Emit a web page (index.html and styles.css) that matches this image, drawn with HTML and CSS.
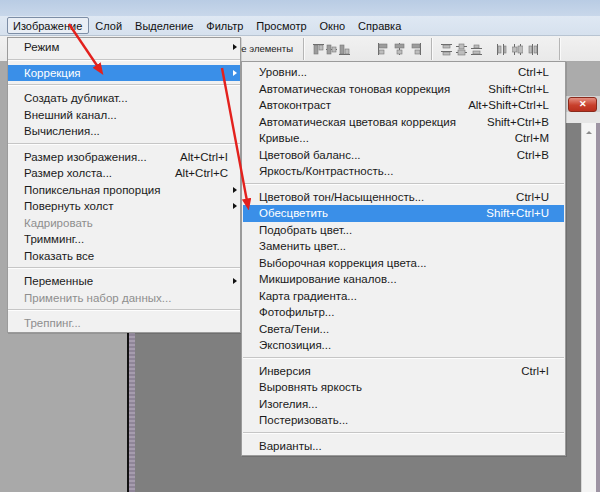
FILE: index.html
```html
<!DOCTYPE html>
<html lang="ru">
<head>
<meta charset="utf-8">
<title>Изображение — Коррекция</title>
<link rel="stylesheet" href="styles.css">
</head>
<body>
<div class="screen">
  <div class="titlebar"></div>
  <nav class="menubar">
    <span class="mb-item active">Изображение</span>
    <span class="mb-item">Слой</span>
    <span class="mb-item">Выделение</span>
    <span class="mb-item">Фильтр</span>
    <span class="mb-item">Просмотр</span>
    <span class="mb-item">Окно</span>
    <span class="mb-item">Справка</span>
  </nav>
  <div class="toolbar">
    <div class="tb-options"><span class="tb-label">Автовыбор: Слой&nbsp;&nbsp;Показать управляющие элементы</span></div>
    <span class="tb-sep"></span>
    <div class="tb-group g1">
      <svg class="ico" viewBox="0 0 11 14"><rect x="0" y="2" width="11" height="1" fill="#6a6a6a"/><rect x="1" y="3" width="4" height="9" fill="#9c9c9c" stroke="#777" stroke-width=".6"/><rect x="6" y="3" width="4" height="5" fill="#bdbdbd" stroke="#777" stroke-width=".6"/></svg>
      <svg class="ico" viewBox="0 0 11 14"><rect x="0" y="7" width="11" height="1" fill="#6a6a6a"/><rect x="1" y="3" width="4" height="9" fill="#9c9c9c" stroke="#777" stroke-width=".6"/><rect x="6" y="5" width="4" height="5" fill="#bdbdbd" stroke="#777" stroke-width=".6"/></svg>
      <svg class="ico" viewBox="0 0 11 14"><rect x="0" y="12" width="11" height="1" fill="#6a6a6a"/><rect x="1" y="3" width="4" height="9" fill="#9c9c9c" stroke="#777" stroke-width=".6"/><rect x="6" y="7" width="4" height="5" fill="#bdbdbd" stroke="#777" stroke-width=".6"/></svg>
    </div>
    <div class="tb-group g2">
      <svg class="ico" viewBox="0 0 11 14"><rect x="1" y="1" width="1" height="12" fill="#6a6a6a"/><rect x="2" y="2" width="8" height="4" fill="#9c9c9c" stroke="#777" stroke-width=".6"/><rect x="2" y="8" width="5" height="4" fill="#bdbdbd" stroke="#777" stroke-width=".6"/></svg>
      <svg class="ico" viewBox="0 0 11 14"><rect x="5" y="1" width="1" height="12" fill="#6a6a6a"/><rect x="1" y="2" width="9" height="4" fill="#9c9c9c" stroke="#777" stroke-width=".6"/><rect x="3" y="8" width="5" height="4" fill="#bdbdbd" stroke="#777" stroke-width=".6"/></svg>
      <svg class="ico" viewBox="0 0 11 14"><rect x="9" y="1" width="1" height="12" fill="#6a6a6a"/><rect x="1" y="2" width="8" height="4" fill="#9c9c9c" stroke="#777" stroke-width=".6"/><rect x="4" y="8" width="5" height="4" fill="#bdbdbd" stroke="#777" stroke-width=".6"/></svg>
    </div>
    <span class="tb-sep"></span>
    <div class="tb-group g3">
      <svg class="ico" viewBox="0 0 11 14"><rect x="0" y="2" width="11" height="1" fill="#6a6a6a"/><rect x="0" y="9" width="11" height="1" fill="#6a6a6a"/><rect x="2" y="3" width="7" height="3" fill="#bdbdbd" stroke="#777" stroke-width=".6"/><rect x="2" y="10" width="7" height="3" fill="#bdbdbd" stroke="#777" stroke-width=".6"/></svg>
      <svg class="ico" viewBox="0 0 11 14"><rect x="0" y="4" width="11" height="1" fill="#6a6a6a"/><rect x="0" y="10" width="11" height="1" fill="#6a6a6a"/><rect x="3" y="2" width="5" height="5" fill="#bdbdbd" stroke="#777" stroke-width=".6"/><rect x="2" y="8" width="7" height="5" fill="#bdbdbd" stroke="#777" stroke-width=".6"/></svg>
      <svg class="ico" viewBox="0 0 11 14"><rect x="0" y="6" width="11" height="1" fill="#6a6a6a"/><rect x="0" y="12" width="11" height="1" fill="#6a6a6a"/><rect x="3" y="3" width="5" height="3" fill="#bdbdbd" stroke="#777" stroke-width=".6"/><rect x="2" y="9" width="7" height="3" fill="#bdbdbd" stroke="#777" stroke-width=".6"/></svg>
    </div>
    <div class="tb-group g4">
      <svg class="ico" viewBox="0 0 11 14"><rect x="1" y="2" width="1" height="11" fill="#6a6a6a"/><rect x="7" y="2" width="1" height="11" fill="#6a6a6a"/><rect x="2" y="4" width="3" height="7" fill="#bdbdbd" stroke="#777" stroke-width=".6"/><rect x="8" y="4" width="2" height="7" fill="#bdbdbd" stroke="#777" stroke-width=".6"/></svg>
      <svg class="ico" viewBox="0 0 11 14"><rect x="2" y="2" width="1" height="11" fill="#6a6a6a"/><rect x="8" y="2" width="1" height="11" fill="#6a6a6a"/><rect x="0" y="5" width="5" height="5" fill="#bdbdbd" stroke="#777" stroke-width=".6"/><rect x="6" y="4" width="5" height="7" fill="#bdbdbd" stroke="#777" stroke-width=".6"/></svg>
      <svg class="ico" viewBox="0 0 11 14"><rect x="4" y="2" width="1" height="11" fill="#6a6a6a"/><rect x="9" y="2" width="1" height="11" fill="#6a6a6a"/><rect x="1" y="4" width="3" height="7" fill="#bdbdbd" stroke="#777" stroke-width=".6"/><rect x="6" y="4" width="3" height="7" fill="#bdbdbd" stroke="#777" stroke-width=".6"/></svg>
    </div>
    <span class="tb-sep"></span>
  </div>
  <div class="workspace">
    <div class="left-panel"></div>
    <div class="divider"></div>
    <div class="right-area">
      <div class="band"></div>
      <div class="doc-title"><span class="close-btn">✕</span></div>
      <div class="doc-strip"></div>
      <div class="doc-body">
        <div class="canvas"></div>
        <div class="scroll"><span class="scroll-up"></span></div>
        <div class="edge"></div>
      </div>
    </div>
  </div>

  <div class="menu menu-main">
    <div class="row"><span class="lbl">Режим</span><span class="sc"></span><span class="arr"></span></div>
    <div class="sep"></div>
    <div class="row hl"><span class="lbl">Коррекция</span><span class="sc"></span><span class="arr"></span></div>
    <div class="sep"></div>
    <div class="row"><span class="lbl">Создать дубликат...</span></div>
    <div class="row"><span class="lbl">Внешний канал...</span></div>
    <div class="row"><span class="lbl">Вычисления...</span></div>
    <div class="sep"></div>
    <div class="row"><span class="lbl">Размер изображения...</span><span class="sc">Alt+Ctrl+I</span></div>
    <div class="row"><span class="lbl">Размер холста...</span><span class="sc">Alt+Ctrl+C</span></div>
    <div class="row"><span class="lbl">Попиксельная пропорция</span><span class="sc"></span><span class="arr"></span></div>
    <div class="row"><span class="lbl">Повернуть холст</span><span class="sc"></span><span class="arr"></span></div>
    <div class="row dis"><span class="lbl">Кадрировать</span></div>
    <div class="row"><span class="lbl">Тримминг...</span></div>
    <div class="row"><span class="lbl">Показать все</span></div>
    <div class="sep"></div>
    <div class="row"><span class="lbl">Переменные</span><span class="sc"></span><span class="arr"></span></div>
    <div class="row dis"><span class="lbl">Применить набор данных...</span></div>
    <div class="sep"></div>
    <div class="row dis"><span class="lbl">Треппинг...</span></div>
  </div>

  <div class="menu menu-sub">
    <div class="row"><span class="lbl">Уровни...</span><span class="sc">Ctrl+L</span></div>
    <div class="row"><span class="lbl">Автоматическая тоновая коррекция</span><span class="sc">Shift+Ctrl+L</span></div>
    <div class="row"><span class="lbl">Автоконтраст</span><span class="sc">Alt+Shift+Ctrl+L</span></div>
    <div class="row"><span class="lbl">Автоматическая цветовая коррекция</span><span class="sc">Shift+Ctrl+B</span></div>
    <div class="row"><span class="lbl">Кривые...</span><span class="sc">Ctrl+M</span></div>
    <div class="row"><span class="lbl">Цветовой баланс...</span><span class="sc">Ctrl+B</span></div>
    <div class="row"><span class="lbl">Яркость/Контрастность...</span></div>
    <div class="sep"></div>
    <div class="row"><span class="lbl">Цветовой тон/Насыщенность...</span><span class="sc">Ctrl+U</span></div>
    <div class="row hl"><span class="lbl">Обесцветить</span><span class="sc">Shift+Ctrl+U</span></div>
    <div class="row"><span class="lbl">Подобрать цвет...</span></div>
    <div class="row"><span class="lbl">Заменить цвет...</span></div>
    <div class="row"><span class="lbl">Выборочная коррекция цвета...</span></div>
    <div class="row"><span class="lbl">Микширование каналов...</span></div>
    <div class="row"><span class="lbl">Карта градиента...</span></div>
    <div class="row"><span class="lbl">Фотофильтр...</span></div>
    <div class="row"><span class="lbl">Света/Тени...</span></div>
    <div class="row"><span class="lbl">Экспозиция...</span></div>
    <div class="sep"></div>
    <div class="row"><span class="lbl">Инверсия</span><span class="sc">Ctrl+I</span></div>
    <div class="row"><span class="lbl">Выровнять яркость</span></div>
    <div class="row"><span class="lbl">Изогелия...</span></div>
    <div class="row"><span class="lbl">Постеризовать...</span></div>
    <div class="sep"></div>
    <div class="row"><span class="lbl">Варианты...</span></div>
  </div>

  <svg class="arrows" viewBox="0 0 600 492" width="600" height="492">
    <defs>
      <marker id="ah" markerWidth="5" markerHeight="4" refX="1" refY="2" orient="auto" markerUnits="strokeWidth">
        <path d="M0,0 L5,2 L0,4 z" fill="#e3211d"/>
      </marker>
    </defs>
    <line x1="69" y1="24" x2="98" y2="67" stroke="#e3211d" stroke-width="2.4" marker-end="url(#ah)"/>
    <line x1="222" y1="68" x2="247" y2="201" stroke="#e3211d" stroke-width="2.4" marker-end="url(#ah)"/>
  </svg>
</div>
</body>
</html>
```

FILE: styles.css
```css
* { box-sizing: border-box; }
html, body { margin: 0; padding: 0; }
body {
  width: 600px;
  height: 492px;
  overflow: hidden;
  font-family: "Liberation Sans", Arial, sans-serif;
  font-size: 11px;
  color: #1a1a1a;
}
.screen {
  position: relative;
  width: 600px;
  height: 492px;
  display: flex;
  flex-direction: column;
  background: #808080;
  overflow: hidden;
}
.titlebar {
  height: 16px;
  flex: none;
  background: linear-gradient(#b9cce4, #c8d7ea);
}
.menubar {
  height: 20px;
  flex: none;
  display: flex;
  align-items: center;
  padding-left: 7px;
  background: linear-gradient(#dfe8f3, #d6e1ee);
  border-bottom: 1px solid #b8c4d2;
}
.mb-item {
  padding: 0 6px 0 5px;
  height: 17px;
  line-height: 16px;
  font-size: 11px;
  color: #111;
  border: 1px solid transparent;
}
.mb-item.active {
  border-color: #7d8ea6;
  border-radius: 2px;
  background: #e9eef5;
}
.toolbar {
  height: 26px;
  flex: none;
  display: flex;
  align-items: center;
  background: linear-gradient(#f1f1f1, #e9e9e9);
  border-bottom: 1px solid #a9a9a9;
}
.tb-options {
  width: 298px;
  flex: none;
  display: flex;
  justify-content: flex-end;
  overflow: hidden;
  padding-right: 5px;
}
.tb-label {
  white-space: nowrap;
  font-size: 9.5px;
  color: #222;
}
.tb-sep {
  width: 2px;
  height: 22px;
  flex: none;
  border-left: 1px solid #b5b5b5;
  border-right: 1px solid #fafafa;
  margin-left: 5px;
}
.tb-group {
  display: flex;
  align-items: center;
  flex: none;
}
.ico { width: 11px; height: 14px; display: block; }
.g1 { margin-left: 8px; gap: 2px; }
.g2 { margin-left: 27px; gap: 6px; }
.g3 { margin-left: 8px; gap: 4px; }
.g4 { margin-left: 14px; gap: 5px; }
.tb-group.g4 + .tb-sep { margin-left: 20px; }
.tb-group.g2 + .tb-sep { margin-left: 9px; }

.workspace {
  flex: 1;
  display: grid;
  grid-template-columns: 127px 8px 1fr;
}
.left-panel { background: #a9a9a9; }
.divider {
  border-left: 2px solid #111;
  background: repeating-linear-gradient(#8f8598 0 2px, #a69cae 2px 4px);
}
.right-area {
  display: flex;
  flex-direction: column;
}
.band { height: 34px; background: #ababab; flex: none; }
.doc-title {
  height: 16px;
  flex: none;
  display: flex;
  justify-content: flex-end;
  align-items: center;
  padding-right: 3px;
  background: #d2d2d2;
}
.close-btn {
  width: 29px;
  height: 15px;
  border-radius: 3px;
  background: linear-gradient(#e48e80, #c8402c 55%, #b9301e);
  border: 1px solid #8a2a1c;
  color: #fff;
  font-size: 9px;
  line-height: 13px;
  text-align: center;
  font-weight: bold;
}
.doc-strip { height: 11px; flex: none; background: #e6e6e6; }
.doc-body {
  flex: 1;
  display: grid;
  grid-template-columns: 1fr 15px 4px;
}
.canvas { background: #7f7f7f; }
.scroll {
  background: #f4f4f4;
  border-left: 1px solid #d8d8d8;
  display: flex;
  justify-content: center;
  padding-top: 8px;
}
.scroll-up {
  width: 0; height: 0;
  border-left: 3px solid transparent;
  border-right: 3px solid transparent;
  border-bottom: 3px solid #8a8a8a;
}
.edge { background: #9d94a3; }

.menu {
  position: absolute;
  background: #f1f1f1;
  border: 1px solid #9b9b9b;
  box-shadow: 1px 1px 0 rgba(0,0,0,0.12);
  font-size: 11.5px;
}
.menu-main {
  left: 7px;
  top: 37px;
  width: 234px;
  padding: 1px 0 0;
}
.menu-sub {
  left: 241px;
  top: 61px;
  width: 325px;
  padding: 2px 1px 1px;
}
.row {
  height: 16.5px;
  line-height: 16.5px;
  display: grid;
  grid-template-columns: 1fr auto 12px;
  white-space: nowrap;
}
.menu-main .row { padding-left: 16px; }
.menu-sub .row { padding-left: 16px; grid-template-columns: 1fr auto 15px; }
.row.hl { background: #3a8fe8; color: #fff; }
.row.dis { color: #8e8e8e; }
.arr {
  width: 0; height: 0;
  align-self: center;
  margin-left: 5px;
  border-top: 3.5px solid transparent;
  border-bottom: 3.5px solid transparent;
  border-left: 4px solid #111;
}
.row.hl .arr { border-left-color: #fff; }
.sep {
  height: 1px;
  margin: 3px 0 4px;
  background: #c6c6c6;
  border-bottom: 1px solid #fdfdfd;
  box-sizing: content-box;
}
.arrows {
  position: absolute;
  left: 0;
  top: 0;
  pointer-events: none;
}
```
